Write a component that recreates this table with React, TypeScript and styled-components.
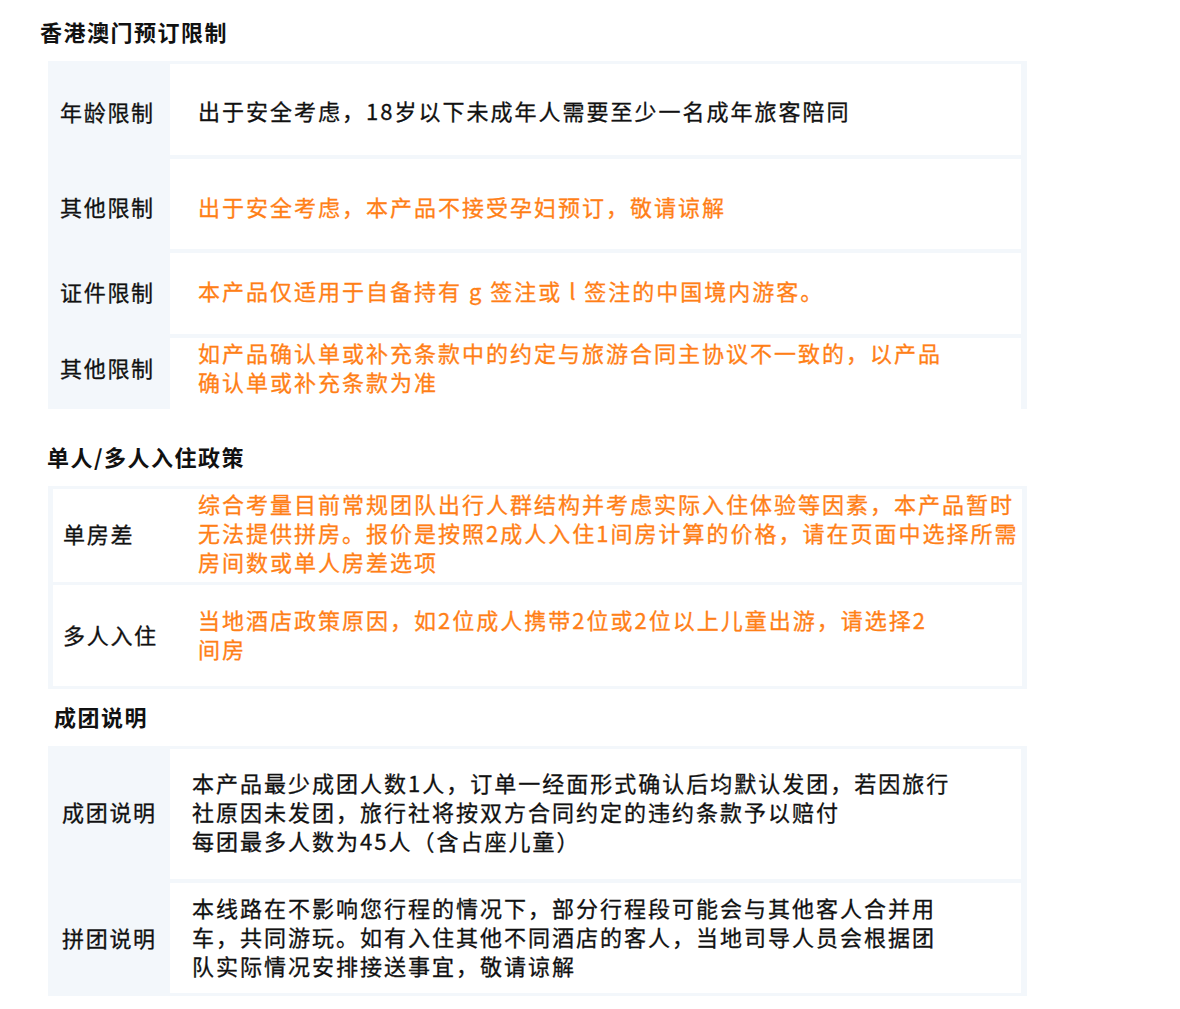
import styled, { createGlobalStyle } from 'styled-components'

const GlobalStyle = createGlobalStyle`
  body {
    margin: 0;
    background: #ffffff;
    font-family: 'Noto Sans CJK SC', 'Noto Sans', sans-serif;
    color: #111111;
  }
`

const Page = styled.main`
  width: 1180px;
  padding-top: 16px;
`

const SectionTitle = styled.h2<{ indent: number; top: number }>`
  margin: ${({ top }) => top}px 0 15px ${({ indent }) => indent}px;
  font-size: 22px;
  line-height: 30px;
  font-weight: 700;
  letter-spacing: 1.5px;
`

const Table = styled.section<{ variant: 'split' | 'flat' }>`
  margin-left: 48px;
  width: 979px;
  box-sizing: border-box;
  background: #f3f7fb;
  padding: ${({ variant }) => (variant === 'flat' ? '3px 5px 3px 5px' : '3px 6px 3px 0')};
  display: flex;
  flex-direction: column;
  gap: 4px;
`

const Row = styled.div<{ height: number; labelWidth: number }>`
  display: grid;
  grid-template-columns: ${({ labelWidth }) => labelWidth}px 1fr;
  height: ${({ height }) => height}px;
`

// shift moves the text of a row up (negative) or down (positive) from the middle
const Label = styled.div<{ pad: number; shift: number; white?: boolean }>`
  box-sizing: border-box;
  display: flex;
  align-items: center;
  padding-left: ${({ pad }) => pad}px;
  padding-top: ${({ shift }) => Math.max(shift * 2, 0)}px;
  padding-bottom: ${({ shift }) => Math.max(-shift * 2, 0)}px;
  background: ${({ white }) => (white ? '#ffffff' : 'transparent')};
  font-size: 22px;
  letter-spacing: 1.7px;
  color: #111111;
  -webkit-text-stroke: 0.3px currentColor;
`

const Content = styled.div<{ pad: number; shift: number; warn?: boolean }>`
  box-sizing: border-box;
  display: flex;
  flex-direction: column;
  justify-content: center;
  padding-left: ${({ pad }) => pad}px;
  padding-top: ${({ shift }) => Math.max(shift * 2, 0)}px;
  padding-bottom: ${({ shift }) => Math.max(-shift * 2, 0)}px;
  background: #ffffff;
  font-size: 22px;
  line-height: 29px;
  letter-spacing: 2px;
  color: ${({ warn }) => (warn ? '#ff7f17' : '#111111')};
  -webkit-text-stroke: 0.3px currentColor;
`

type Item = { label: string; lines: string[]; warn?: boolean; height: number; shift: number }

const limits: Item[] = [
  { label: '年龄限制', lines: ['出于安全考虑，18岁以下未成年人需要至少一名成年旅客陪同'], height: 91, shift: 1 },
  { label: '其他限制', lines: ['出于安全考虑，本产品不接受孕妇预订，敬请谅解'], warn: true, height: 90, shift: 2 },
  {
    label: '证件限制',
    lines: ['本产品仅适用于自备持有 g 签注或 l 签注的中国境内游客。'],
    warn: true,
    height: 81,
    shift: -3,
  },
  {
    label: '其他限制',
    lines: ['如产品确认单或补充条款中的约定与旅游合同主协议不一致的，以产品', '确认单或补充条款为准'],
    warn: true,
    height: 68,
    shift: -7,
  },
]

const stay: Item[] = [
  {
    label: '单房差',
    lines: [
      '综合考量目前常规团队出行人群结构并考虑实际入住体验等因素，本产品暂时',
      '无法提供拼房。报价是按照2成人入住1间房计算的价格，请在页面中选择所需',
      '房间数或单人房差选项',
    ],
    warn: true,
    height: 92,
    shift: -3,
  },
  {
    label: '多人入住',
    lines: ['当地酒店政策原因，如2位成人携带2位或2位以上儿童出游，请选择2', '间房'],
    warn: true,
    height: 101,
    shift: -1.5,
  },
]

const groups: Item[] = [
  {
    label: '成团说明',
    lines: [
      '本产品最少成团人数1人，订单一经面形式确认后均默认发团，若因旅行',
      '社原因未发团，旅行社将按双方合同约定的违约条款予以赔付',
      '每团最多人数为45人（含占座儿童）',
    ],
    height: 130,
    shift: -3,
  },
  {
    label: '拼团说明',
    lines: [
      '本线路在不影响您行程的情况下，部分行程段可能会与其他客人合并用',
      '车，共同游玩。如有入住其他不同酒店的客人，当地司导人员会根据团',
      '队实际情况安排接送事宜，敬请谅解',
    ],
    height: 110,
    shift: -1.5,
  },
]

function Lines({ lines }: { lines: string[] }) {
  return (
    <>
      {lines.map((line, i) => (
        <span key={i}>{line}</span>
      ))}
    </>
  )
}

export default function App() {
  return (
    <Page>
      <GlobalStyle />

      <SectionTitle indent={40} top={0}>
        香港澳门预订限制
      </SectionTitle>
      <Table variant="split">
        {limits.map((item, i) => (
          <Row key={i} height={item.height} labelWidth={122}>
            <Label pad={12} shift={item.shift}>
              {item.label}
            </Label>
            <Content pad={28} shift={item.shift} warn={item.warn}>
              <Lines lines={item.lines} />
            </Content>
          </Row>
        ))}
      </Table>

      <SectionTitle indent={47} top={32}>
        单人/多人入住政策
      </SectionTitle>
      <Table variant="flat">
        {stay.map((item, i) => (
          <Row key={i} height={item.height} labelWidth={117}>
            <Label pad={10} shift={item.shift} white>
              {item.label}
            </Label>
            <Content pad={28} shift={item.shift} warn={item.warn}>
              <Lines lines={item.lines} />
            </Content>
          </Row>
        ))}
      </Table>

      <SectionTitle indent={54} top={12}>
        成团说明
      </SectionTitle>
      <Table variant="split">
        {groups.map((item, i) => (
          <Row key={i} height={item.height} labelWidth={122}>
            <Label pad={14} shift={item.shift}>
              {item.label}
            </Label>
            <Content pad={22} shift={item.shift} warn={item.warn}>
              <Lines lines={item.lines} />
            </Content>
          </Row>
        ))}
      </Table>
    </Page>
  )
}
